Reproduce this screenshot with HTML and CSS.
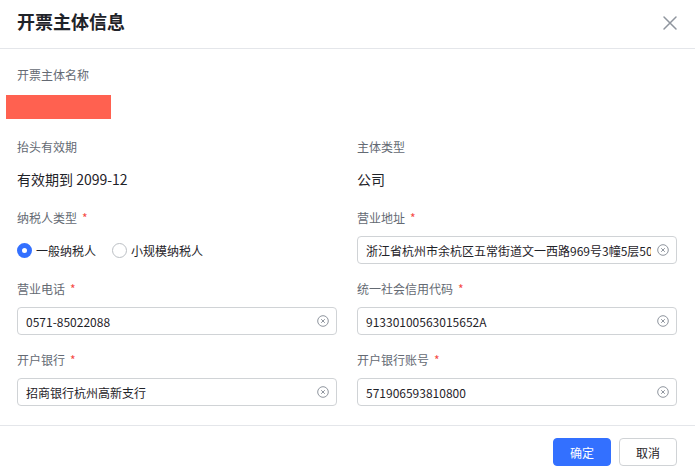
FILE: index.html
```html
<!DOCTYPE html>
<html lang="zh-CN">
<head>
<meta charset="utf-8">
<link rel="stylesheet" href="styles.css">
</head>
<body>
<div class="modal">
  <div class="modal-header">
    <h1 class="modal-title">开票主体信息</h1>
    <button class="close-btn" aria-label="关闭">
      <svg width="16" height="16" viewBox="0 0 16 16"><path d="M2 2 L14 14 M14 2 L2 14" stroke="#8f959e" stroke-width="1.5" fill="none" stroke-linecap="round"/></svg>
    </button>
  </div>
  <div class="modal-body">
    <div class="form-grid">
      <div class="item item-first">
        <div class="label">开票主体名称</div>
        <div class="control"><div class="redact"></div></div>
      </div>
      <div class="item item-first"></div>

      <div class="item">
        <div class="label">抬头有效期</div>
        <div class="control value">有效期到 2099-12</div>
      </div>
      <div class="item">
        <div class="label">主体类型</div>
        <div class="control value">公司</div>
      </div>

      <div class="item">
        <div class="label">纳税人类型<span class="req">*</span></div>
        <div class="control radios">
          <label class="radio"><span class="dot checked"></span>一般纳税人</label>
          <label class="radio"><span class="dot"></span>小规模纳税人</label>
        </div>
      </div>
      <div class="item">
        <div class="label">营业地址<span class="req">*</span></div>
        <div class="control input"><span class="input-text">浙江省杭州市余杭区五常街道文一西路969号3幢5层50</span><span class="clear"><svg width="12" height="12" viewBox="0 0 12 12"><circle cx="6" cy="6" r="5.3" stroke="#8f959e" stroke-width="1" fill="none"/><path d="M4.2 4.2 L7.8 7.8 M7.8 4.2 L4.2 7.8" stroke="#8f959e" stroke-width="1" fill="none"/></svg></span></div>
      </div>

      <div class="item">
        <div class="label">营业电话<span class="req">*</span></div>
        <div class="control input"><span class="input-text">0571-85022088</span><span class="clear"><svg width="12" height="12" viewBox="0 0 12 12"><circle cx="6" cy="6" r="5.3" stroke="#8f959e" stroke-width="1" fill="none"/><path d="M4.2 4.2 L7.8 7.8 M7.8 4.2 L4.2 7.8" stroke="#8f959e" stroke-width="1" fill="none"/></svg></span></div>
      </div>
      <div class="item">
        <div class="label">统一社会信用代码<span class="req">*</span></div>
        <div class="control input"><span class="input-text">91330100563015652A</span><span class="clear"><svg width="12" height="12" viewBox="0 0 12 12"><circle cx="6" cy="6" r="5.3" stroke="#8f959e" stroke-width="1" fill="none"/><path d="M4.2 4.2 L7.8 7.8 M7.8 4.2 L4.2 7.8" stroke="#8f959e" stroke-width="1" fill="none"/></svg></span></div>
      </div>

      <div class="item">
        <div class="label">开户银行<span class="req">*</span></div>
        <div class="control input"><span class="input-text">招商银行杭州高新支行</span><span class="clear"><svg width="12" height="12" viewBox="0 0 12 12"><circle cx="6" cy="6" r="5.3" stroke="#8f959e" stroke-width="1" fill="none"/><path d="M4.2 4.2 L7.8 7.8 M7.8 4.2 L4.2 7.8" stroke="#8f959e" stroke-width="1" fill="none"/></svg></span></div>
      </div>
      <div class="item">
        <div class="label">开户银行账号<span class="req">*</span></div>
        <div class="control input"><span class="input-text">571906593810800</span><span class="clear"><svg width="12" height="12" viewBox="0 0 12 12"><circle cx="6" cy="6" r="5.3" stroke="#8f959e" stroke-width="1" fill="none"/><path d="M4.2 4.2 L7.8 7.8 M7.8 4.2 L4.2 7.8" stroke="#8f959e" stroke-width="1" fill="none"/></svg></span></div>
      </div>
    </div>
  </div>
  <div class="modal-footer">
    <button class="btn btn-primary">确定</button>
    <button class="btn btn-default">取消</button>
  </div>
</div>
</body>
</html>
```

FILE: styles.css
```css
* { box-sizing: border-box; }
html, body {
  margin: 0;
  padding: 0;
  background: #fff;
}
body {
  font-family: "Noto Sans CJK SC", "Noto Sans", sans-serif;
  color: #1f2329;
}
.modal {
  width: 695px;
  height: 472px;
  background: #fff;
}
.modal-header {
  height: 49px;
  border-bottom: 1px solid #e4e6ea;
  display: flex;
  align-items: flex-start;
  justify-content: space-between;
  padding: 10px 17px 0 17px;
}
.modal-title {
  margin: 0;
  font-size: 18px;
  line-height: 22px;
  font-weight: 700;
  color: #1f2329;
}
.close-btn {
  border: 0;
  background: none;
  padding: 0;
  margin-top: 5px;
  width: 16px;
  height: 16px;
  display: flex;
}
.modal-body {
  padding: 16px 18px 4px 17px;
  border-bottom: 1px solid #e4e6ea;
}
.form-grid {
  display: grid;
  grid-template-columns: 320px 320px;
  column-gap: 20px;
}
.item {
  margin-bottom: 15px;
}
.item-first {
  margin-bottom: 16px;
}
.label {
  font-size: 12px;
  line-height: 20px;
  color: #646a73;
  margin-bottom: 8px;
}
.req {
  color: #f54a45;
  margin-left: 5px;
  font-size: 12px;
}
.control {
  height: 28px;
  display: flex;
  align-items: center;
}
.redact {
  width: 105px;
  height: 24px;
  background: #ff6150;
  margin-left: -11px;
}
.value {
  font-size: 14px;
  color: #1f2329;
}
.radios {
  gap: 16px;
}
.radio {
  display: flex;
  align-items: center;
  font-size: 12px;
  color: #1f2329;
}
.dot {
  width: 15px;
  height: 15px;
  border-radius: 50%;
  border: 1px solid #bbbfc4;
  background: #fff;
  margin-right: 4px;
  display: inline-block;
}
.dot.checked {
  border: 5px solid #3370ff;
  background: #fff;
}
.input {
  border: 1px solid #d0d3d6;
  border-radius: 4px;
  padding: 0 7px 0 8px;
  font-size: 12px;
  color: #1f2329;
  gap: 6px;
}
.input-text {
  flex: 1;
  white-space: nowrap;
  overflow: hidden;
}
.clear {
  display: flex;
  width: 12px;
  height: 12px;
}
.modal-footer {
  display: flex;
  justify-content: flex-end;
  gap: 8px;
  padding: 12px 18px 0 0;
}
.btn {
  width: 58px;
  height: 28px;
  border-radius: 4px;
  font-family: "Noto Sans CJK SC", "Noto Sans", sans-serif;
  font-size: 12px;
  padding: 0;
}
.btn-primary {
  background: #3370ff;
  border: 1px solid #3370ff;
  color: #fff;
}
.btn-default {
  background: #fff;
  border: 1px solid #d0d3d6;
  color: #1f2329;
}
```
